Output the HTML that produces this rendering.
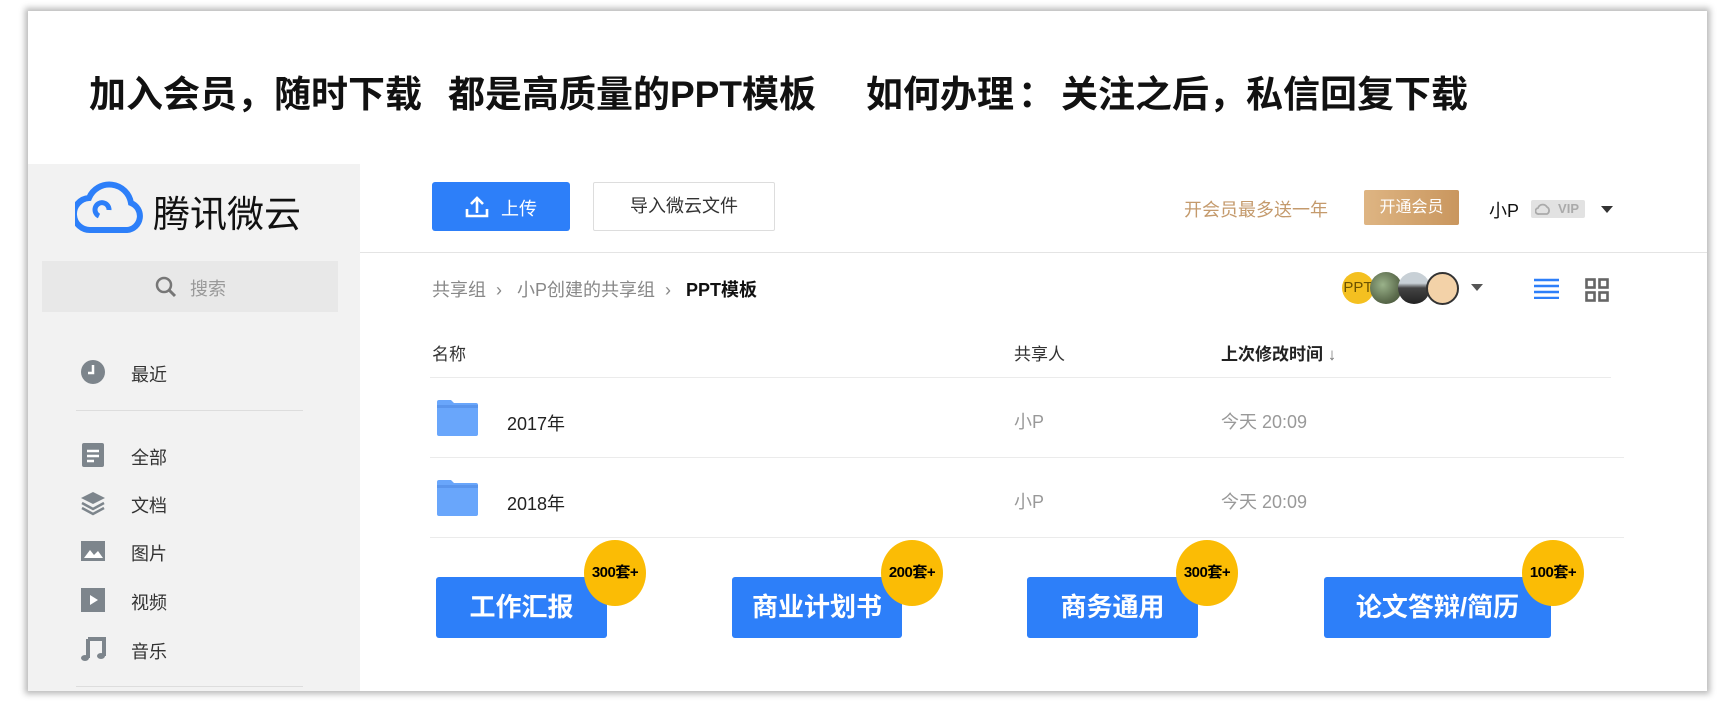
<!DOCTYPE html>
<html><head><meta charset="utf-8"><style>
*{margin:0;padding:0;box-sizing:border-box}
body{width:1735px;height:706px;background:#fff;position:relative;overflow:hidden;font-family:"Liberation Sans","Noto Sans CJK SC",sans-serif;color:#222}
.a{position:absolute;white-space:nowrap}
.card{position:absolute;left:28px;top:11px;width:1679px;height:680px;background:#fff;box-shadow:0 0 6px 3px rgba(0,0,0,.28)}
.h{font-size:37px;font-weight:bold;color:#111;top:64px}
.side{left:28px;top:164px;width:332px;height:527px;background:#f2f2f2}
.nav{font-size:18px;color:#333;left:131px}
.ic{left:80px;width:26px;height:26px}
.btn{background:#2d7ff9;color:#fff;border-radius:3px;font-size:26px;font-weight:bold;text-align:center;line-height:61px;top:577px;height:61px}
.bd{background:#fbbc05;border-radius:50%;width:62px;height:66px;top:540px;font-size:15px;font-weight:bold;color:#000;text-align:center;line-height:66px;letter-spacing:-0.5px}
.line{height:1px;background:#ebebeb}
.g{color:#999;font-size:18px}
</style></head><body>
<div class="card"></div>
<div class="a h" style="left:89px">加入会员，随时下载</div>
<div class="a h" style="left:448px">都是高质量的PPT模板</div>
<div class="a h" style="left:866px">如何办理<span style="margin:0 6px 0 4px">：</span>关注之后，私信回复下载</div>

<div class="a side"></div>
<svg class="a" style="left:75px;top:180px" width="70" height="54" viewBox="0 0 70 54"><path d="M16 50 H52 A14 14 0 0 0 56 23 A22 22 0 0 0 14 18 A16 16 0 0 0 16 50 Z" fill="none" stroke="#2d7ff9" stroke-width="6"/><path d="M24 36 A7 7 0 1 1 34 30" fill="none" stroke="#2d7ff9" stroke-width="5"/></svg>
<div class="a" style="left:153px;top:184px;font-size:37px;color:#111">腾讯微云</div>
<div class="a" style="left:42px;top:261px;width:296px;height:51px;background:#e8e8e8"></div>
<svg class="a" style="left:155px;top:276px" width="22" height="22" viewBox="0 0 22 22"><circle cx="9" cy="9" r="7" fill="none" stroke="#777" stroke-width="2.5"/><path d="M14 14 L20 20" stroke="#777" stroke-width="3"/></svg>
<div class="a g" style="left:190px;top:275px">搜索</div>

<svg class="a ic" style="top:359px" viewBox="0 0 26 26"><circle cx="13" cy="13" r="12" fill="#7d858c"/><path d="M13 6 V14 H8" stroke="#fff" stroke-width="2.5" fill="none"/></svg>
<div class="a nav" style="top:361px">最近</div>
<div class="a line" style="left:76px;top:410px;width:227px;background:#ddd"></div>
<svg class="a ic" style="top:442px" viewBox="0 0 26 26"><rect x="2" y="1" width="22" height="24" rx="2" fill="#7d858c"/><path d="M7 9H19M7 14H19M7 19H14" stroke="#fff" stroke-width="2.5"/></svg>
<div class="a nav" style="top:444px">全部</div>
<svg class="a ic" style="top:490px" viewBox="0 0 26 26"><path d="M13 2 L25 8 L13 14 L1 8Z" fill="#7d858c"/><path d="M2 13 L13 19 L24 13 M2 18 L13 24 L24 18" stroke="#7d858c" stroke-width="2.5" fill="none"/></svg>
<div class="a nav" style="top:492px">文档</div>
<svg class="a ic" style="top:538px" viewBox="0 0 26 26"><rect x="1" y="3" width="24" height="20" fill="#7d858c"/><path d="M4 20 L10 12 L14 17 L18 13 L23 20Z" fill="#fff"/></svg>
<div class="a nav" style="top:540px">图片</div>
<svg class="a ic" style="top:587px" viewBox="0 0 26 26"><rect x="1" y="1" width="24" height="24" fill="#7d858c"/><path d="M10 8 L18 13 L10 18Z" fill="#fff"/></svg>
<div class="a nav" style="top:589px">视频</div>
<svg class="a ic" style="top:636px" viewBox="0 0 26 26"><path d="M8 3 H24 V20 M8 3 V22" stroke="#7d858c" stroke-width="4" fill="none"/><ellipse cx="5" cy="22" rx="4" ry="3" fill="#7d858c"/><ellipse cx="21" cy="20" rx="4" ry="3" fill="#7d858c"/></svg>
<div class="a nav" style="top:638px">音乐</div>
<div class="a line" style="left:76px;top:686px;width:227px;background:#ddd"></div>

<div class="a" style="left:432px;top:182px;width:138px;height:49px;background:#2d7ff9;border-radius:3px"></div>
<svg class="a" style="left:465px;top:195px" width="24" height="24" viewBox="0 0 24 24"><path d="M12 18 V3 M6 9 L12 3 L18 9 M2 14 V21 H22 V14" stroke="#fff" stroke-width="2.6" fill="none"/></svg>
<div class="a" style="left:501px;top:195px;font-size:18px;color:#fff">上传</div>
<div class="a" style="left:593px;top:182px;width:182px;height:49px;border:1px solid #ddd;border-radius:2px;font-size:18px;color:#333;text-align:center;line-height:47px">导入微云文件</div>
<div class="a" style="left:1184px;top:196px;font-size:18px;color:#c49a6c">开会员最多送一年</div>
<div class="a" style="left:1364px;top:190px;width:95px;height:35px;background:linear-gradient(90deg,#deb583,#c9965e);border-radius:2px;color:#fff;font-size:16px;text-align:center;line-height:35px">开通会员</div>
<div class="a" style="left:1489px;top:197px;font-size:18px;color:#111">小P</div>
<div class="a" style="left:1531px;top:200px;width:54px;height:18px;background:#e2e2e2;color:#aaa;font-size:13px;font-weight:bold;line-height:18px;text-align:right;padding-right:6px;border-radius:2px">VIP</div>
<svg class="a" style="left:1535px;top:202px" width="16" height="14" viewBox="0 0 16 14"><path d="M4 12 H12 A4 4 0 0 0 12 5 A5 5 0 0 0 3 6 A3 3 0 0 0 4 12Z" fill="none" stroke="#aaa" stroke-width="1.8"/></svg>
<div class="a" style="left:1601px;top:206px;border:6px solid transparent;border-top:7px solid #333"></div>
<div class="a line" style="left:360px;top:252px;width:1347px;background:#e4e4e4"></div>

<div class="a" style="left:432px;top:276px;font-size:18px;color:#888">共享组 &nbsp;›&nbsp;&nbsp; 小P创建的共享组 &nbsp;›&nbsp;&nbsp; <b style="color:#111">PPT模板</b></div>
<div class="a" style="left:1342px;top:272px;width:32px;height:32px;border-radius:50%;background:#f4c020;color:#6b5200;font-size:15px;line-height:32px;text-align:center">PPT</div>
<div class="a" style="left:1370px;top:272px;width:32px;height:32px;border-radius:50%;background:radial-gradient(circle at 40% 40%,#9ab28a,#5d6d4e 60%,#3c4a32)"></div>
<div class="a" style="left:1398px;top:272px;width:32px;height:32px;border-radius:50%;background:linear-gradient(180deg,#c8d0d6 0 35%,#444 50%,#222)"></div>
<div class="a" style="left:1426px;top:272px;width:33px;height:33px;border-radius:50%;background:#f3d2a8;border:2px solid #333"></div>
<div class="a" style="left:1471px;top:284px;border:6px solid transparent;border-top:7px solid #555"></div>
<svg class="a" style="left:1534px;top:278px" width="25" height="21" viewBox="0 0 25 21"><path d="M0 2H25M0 8H25M0 14H25M0 20H25" stroke="#2d7ff9" stroke-width="2.5"/></svg>
<svg class="a" style="left:1585px;top:278px" width="24" height="24" viewBox="0 0 24 24"><g fill="none" stroke="#666" stroke-width="2.6"><rect x="1.5" y="1.5" width="8" height="8"/><rect x="14.5" y="1.5" width="8" height="8"/><rect x="1.5" y="14.5" width="8" height="8"/><rect x="14.5" y="14.5" width="8" height="8"/></g></svg>

<div class="a" style="left:432px;top:340px;font-size:17px;color:#333">名称</div>
<div class="a" style="left:1014px;top:340px;font-size:17px;color:#333">共享人</div>
<div class="a" style="left:1221px;top:340px;font-size:17px;color:#222;font-weight:bold">上次修改时间 <span style="color:#777;font-weight:normal">↓</span></div>
<div class="a line" style="left:430px;top:377px;width:1181px"></div>

<svg class="a" style="left:437px;top:400px" width="41" height="36" viewBox="0 0 41 36"><path d="M0 2 Q0 0 2 0 H14 L17 3 H39 Q41 3 41 5 V34 Q41 36 39 36 H2 Q0 36 0 34Z" fill="#69a6fb"/><rect x="0" y="5" width="41" height="3" fill="#5a95ec"/></svg>
<div class="a" style="left:507px;top:410px;font-size:18px;color:#222">2017年</div>
<div class="a g" style="left:1014px;top:408px">小P</div>
<div class="a g" style="left:1221px;top:408px">今天 20:09</div>
<div class="a line" style="left:430px;top:457px;width:1194px"></div>
<svg class="a" style="left:437px;top:480px" width="41" height="36" viewBox="0 0 41 36"><path d="M0 2 Q0 0 2 0 H14 L17 3 H39 Q41 3 41 5 V34 Q41 36 39 36 H2 Q0 36 0 34Z" fill="#69a6fb"/><rect x="0" y="5" width="41" height="3" fill="#5a95ec"/></svg>
<div class="a" style="left:507px;top:490px;font-size:18px;color:#222">2018年</div>
<div class="a g" style="left:1014px;top:488px">小P</div>
<div class="a g" style="left:1221px;top:488px">今天 20:09</div>
<div class="a line" style="left:430px;top:537px;width:1194px"></div>

<div class="a btn" style="left:436px;width:171px">工作汇报</div>
<div class="a btn" style="left:732px;width:170px">商业计划书</div>
<div class="a btn" style="left:1027px;width:171px">商务通用</div>
<div class="a btn" style="left:1324px;width:227px">论文答辩/简历</div>
<div class="a bd" style="left:584px">300套+</div>
<div class="a bd" style="left:881px">200套+</div>
<div class="a bd" style="left:1176px">300套+</div>
<div class="a bd" style="left:1522px">100套+</div>
</body></html>
